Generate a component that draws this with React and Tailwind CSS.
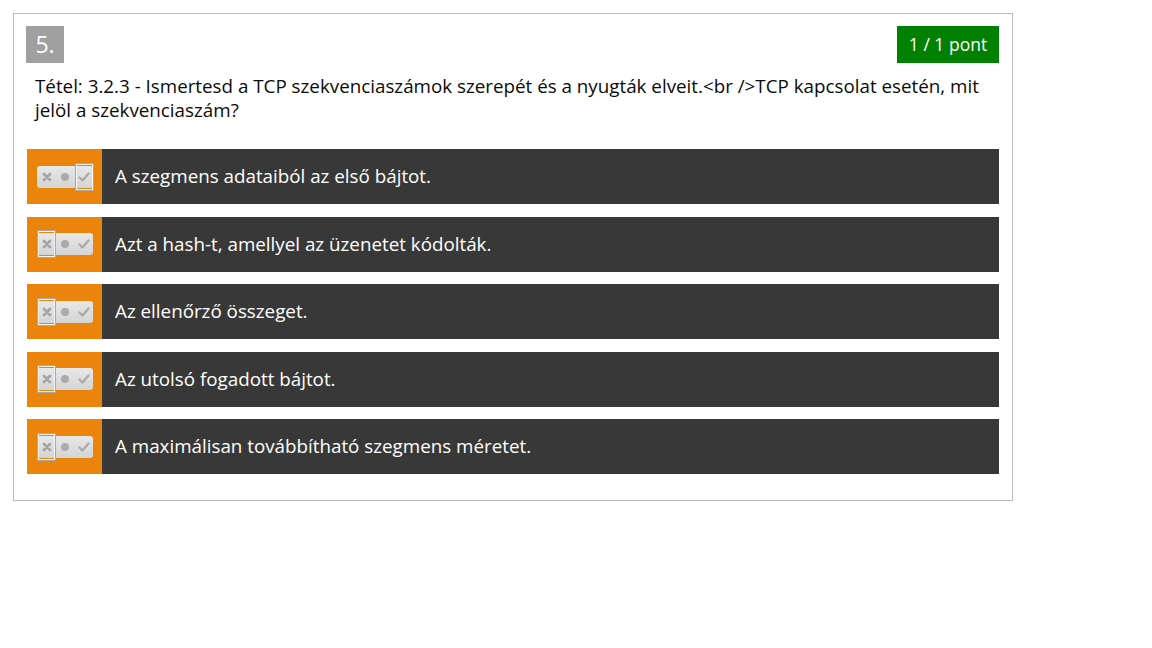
import React from "react";

const answers = [
  { text: "A szegmens adataiból az első bájtot.", sel: "check" },
  { text: "Azt a hash-t, amellyel az üzenetet kódolták.", sel: "x" },
  { text: "Az ellenőrző összeget.", sel: "x" },
  { text: "Az utolsó fogadott bájtot.", sel: "x" },
  { text: "A maximálisan továbbítható szegmens méretet.", sel: "x" },
];

function XIcon() {
  return (
    <svg width="10" height="10" viewBox="0 0 10 10">
      <path d="M2 2 L8 8 M8 2 L2 8" stroke="#a4a4a4" strokeWidth="2.8" strokeLinecap="round" />
    </svg>
  );
}
function Dot() {
  return (
    <svg width="10" height="10" viewBox="0 0 10 10">
      <circle cx="5" cy="5" r="4" fill="#ababab" />
    </svg>
  );
}
function Check() {
  return (
    <svg width="12" height="10" viewBox="0 0 12 10">
      <path d="M1.5 5.5 L4.5 8.5 L10.5 1.5" stroke="#ababab" strokeWidth="2.4" fill="none" strokeLinecap="round" strokeLinejoin="round" />
    </svg>
  );
}

function Toggle({ sel }) {
  return (
    <div className="relative w-[56px] h-[22px] rounded-[3px] bg-gradient-to-b from-[#e8e8e8] to-[#d4d4d4] flex items-center">
      <div className="w-[19px] flex justify-center"><XIcon /></div>
      <div className="w-[18px] flex justify-center"><Dot /></div>
      <div className="w-[19px] flex justify-center"><Check /></div>
      <div
        className={
          "absolute top-[-3px] h-[28px] w-[19px] border border-[#a8a8a8] shadow-[inset_0_0_0_1px_#f4f4f4] " +
          (sel === "check" ? "left-[38px]" : "left-0")
        }
      />
    </div>
  );
}

export default function App() {
  return (
    <div className="bg-white min-h-[648px] w-[1152px] pt-[13px] pl-[13px]" style={{ fontFamily: '"Open Sans", sans-serif' }}>
      <div className="w-[1000px] border border-[#bbbbbb] px-[13px] pt-[12px] pb-[26px]">
        <div className="flex justify-between items-start">
          <div className="ml-[-1px] w-[38px] h-[37px] bg-[#a0a0a0] text-white text-[23px] flex items-center justify-center leading-none">
            5.
          </div>
          <div className="h-[37px] w-[102px] bg-[#008000] text-white text-[17.5px] flex items-center justify-center leading-none">
            1 / 1 pont
          </div>
        </div>
        <div className="mt-[11px] pl-[8px] pr-[10px] text-[18.8px] leading-[24px] text-[#0a0a0a] mb-[27px]">
          Tétel: 3.2.3 - Ismertesd a TCP szekvenciaszámok szerepét és a nyugták elveit.&lt;br /&gt;TCP kapcsolat esetén, mit jelöl a szekvenciaszám?
        </div>
        <div className="flex flex-col gap-[12.5px]">
          {answers.map((a, i) => (
            <div key={i} className="flex h-[55px]">
              <div className="w-[75px] bg-[#ea840c] flex items-center pl-[10px]">
                <Toggle sel={a.sel} />
              </div>
              <div className="flex-1 bg-[#383838] text-white text-[18.8px] flex items-center pl-[13px]">
                {a.text}
              </div>
            </div>
          ))}
        </div>
      </div>
    </div>
  );
}
